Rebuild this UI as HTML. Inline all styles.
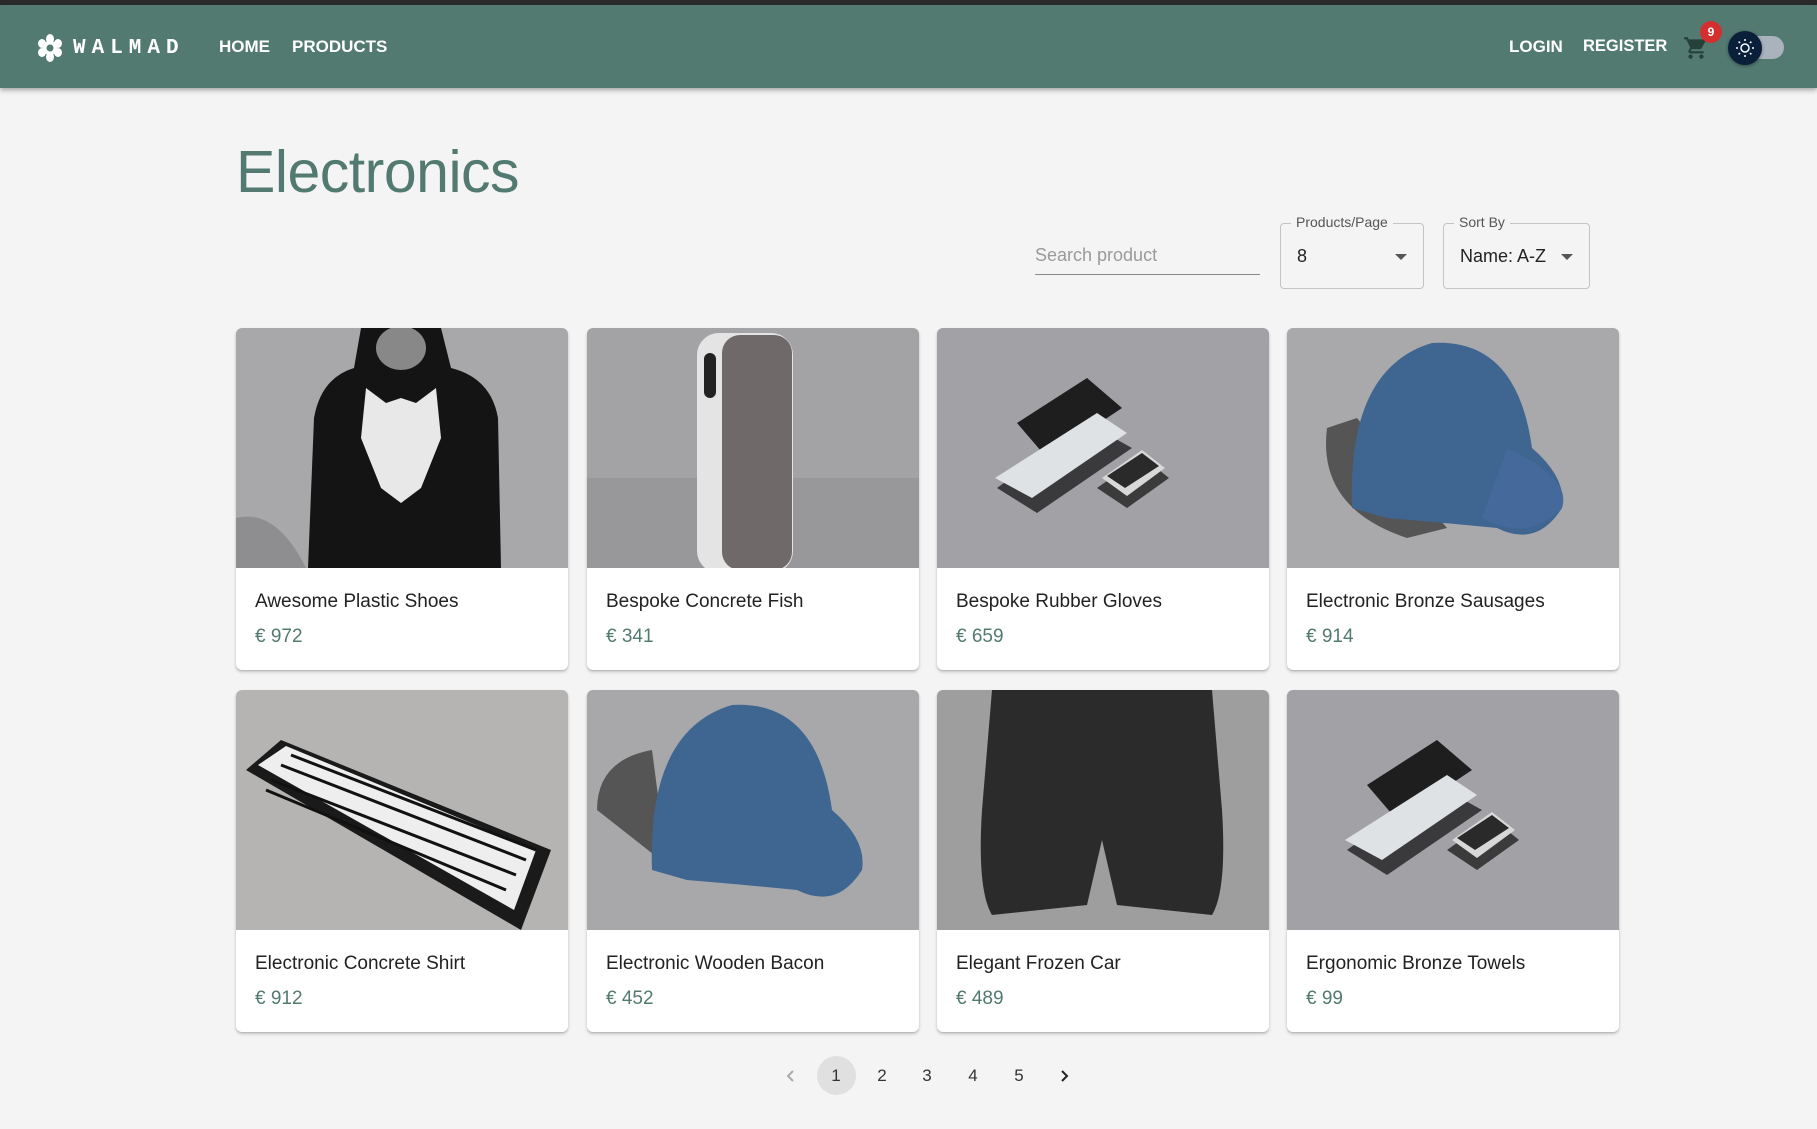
<!DOCTYPE html>
<html><head><meta charset="utf-8"><style>
*{margin:0;padding:0;box-sizing:border-box}
body{width:1817px;height:1129px;background:#f4f4f4;font-family:"Liberation Sans",sans-serif;position:relative;overflow:hidden}
.top{position:absolute;left:0;top:0;width:1817px;height:5px;background:#2b2b2b}
.hdr{position:absolute;left:0;top:5px;width:1817px;height:83px;background:#527a70;box-shadow:0 2px 5px rgba(0,0,0,.35)}
.ab{position:absolute;color:#fff;font-weight:bold;font-size:17px;top:37px}
.logo{position:absolute;left:73px;top:37px;color:#fff;font-family:"Liberation Mono",monospace;font-weight:bold;font-size:21px;letter-spacing:6px}
h1{position:absolute;left:236px;top:138px;font-size:59px;font-weight:normal;color:#527a70;letter-spacing:-0.5px}
.search{position:absolute;left:1035px;top:230px;width:225px;height:45px;border-bottom:1px solid #8a8a8a;color:#9a9a9a;font-size:18px;padding-top:15px}
.box{position:absolute;top:223px;height:66px;border:1px solid #c4c4c4;border-radius:4px;font-size:18px;color:#222}
.box .lb{position:absolute;top:-10px;left:10px;background:#f4f4f4;padding:0 5px;font-size:14px;color:#555}
.box .v{position:absolute;left:16px;top:22px}
.box .ar{position:absolute;top:30px;width:0;height:0;border-left:6px solid transparent;border-right:6px solid transparent;border-top:6px solid #555}
.card{position:absolute;width:332px;height:342px;background:#fff;border-radius:6px;overflow:hidden;box-shadow:0 2px 3px rgba(0,0,0,.2),0 1px 1px rgba(0,0,0,.1)}
.card svg{display:block;width:332px;height:240px}
.card .t{position:absolute;left:19px;top:263px;font-size:19px;color:#222}
.card .p{position:absolute;left:19px;top:298px;font-size:19px;color:#527a70}
.pg{position:absolute;top:1066px;font-size:17px;color:#333;width:38px;text-align:center}
</style></head><body>
<div class="top"></div>
<div class="hdr"></div>
<svg style="position:absolute;left:38px;top:34px" width="24" height="28" viewBox="0 0 24 28"><g fill="#fff"><circle cx="12" cy="14" r="7"/><ellipse cx="12" cy="5" rx="4" ry="5"/><ellipse cx="12" cy="23" rx="4" ry="5"/><ellipse cx="4" cy="9.5" rx="4" ry="4.5"/><ellipse cx="20" cy="9.5" rx="4" ry="4.5"/><ellipse cx="4" cy="18.5" rx="4" ry="4.5"/><ellipse cx="20" cy="18.5" rx="4" ry="4.5"/></g><circle cx="12" cy="14" r="3.5" fill="#527a70"/></svg>
<div class="logo">WALMAD</div>
<div class="ab" style="left:219px">HOME</div>
<div class="ab" style="left:292px">PRODUCTS</div>
<div class="ab" style="left:1509px">LOGIN</div>
<div class="ab" style="left:1583px;font-size:16.5px">REGISTER</div>
<svg style="position:absolute;left:1683px;top:35px" width="26" height="26" viewBox="0 0 24 24"><path fill="#26403a" d="M7 18c-1.1 0-2 .9-2 2s.9 2 2 2 2-.9 2-2-.9-2-2-2zM1 2v2h2l3.6 7.59-1.35 2.45c-.16.28-.25.61-.25.96 0 1.1.9 2 2 2h12v-2H7.42c-.14 0-.25-.11-.25-.25l.03-.12.9-1.63h7.45c.75 0 1.41-.41 1.750-1.03l3.58-6.49A1 1 0 0 0 20 4H5.21l-.94-2H1zm16 16c-1.1 0-2 .9-2 2s.9 2 2 2 2-.9 2-2-.9-2-2-2z"/></svg>
<div style="position:absolute;left:1700px;top:21px;width:22px;height:22px;border-radius:50%;background:#d32f2f;color:#fff;font-size:12px;font-weight:bold;text-align:center;line-height:22px">9</div>
<div style="position:absolute;left:1742px;top:36px;width:42px;height:23px;border-radius:12px;background:#a9b3bd"></div>
<div style="position:absolute;left:1728px;top:31px;width:34px;height:34px;border-radius:50%;background:#0a1f3a;box-shadow:0 1px 3px rgba(0,0,0,.4)"></div>
<svg style="position:absolute;left:1734px;top:37px" width="22" height="22" viewBox="0 0 22 22"><g stroke="#fff" stroke-width="1.5" fill="none"><circle cx="11" cy="11" r="4"/><path d="M11 2v2M11 18v2M2 11h2M18 11h2M4.6 4.6l1.4 1.4M16 16l1.4 1.4M4.6 17.4L6 16M16 6l1.4-1.4"/></g></svg>
<h1>Electronics</h1>
<div class="search">Search product</div>
<div class="box" style="left:1280px;width:144px"><span class="lb">Products/Page</span><span class="v">8</span><span class="ar" style="left:114px"></span></div>
<div class="box" style="left:1443px;width:147px"><span class="lb">Sort By</span><span class="v">Name: A-Z</span><span class="ar" style="left:117px"></span></div>

<div class="card" style="left:236px;top:328px"><svg viewBox="0 0 332 240"><rect width="332" height="240" fill="#a8a8aa"/><path d="M0 190 Q40 180 70 240 H0z" fill="#8e8e90"/><path d="M125 0 H205 L215 40 Q255 50 262 90 L265 240 H72 L78 90 Q85 50 118 40z" fill="#141414"/><ellipse cx="165" cy="20" rx="25" ry="22" fill="#888"/><path d="M130 60 L150 75 L165 70 L180 75 L200 60 L205 110 L185 160 L165 175 L145 160 L125 110z" fill="#e8e8e8"/></svg><div class="t">Awesome Plastic Shoes</div><div class="p">€ 972</div></div>
<div class="card" style="left:587px;top:328px"><svg viewBox="0 0 332 240"><rect width="332" height="240" fill="#a3a3a6"/><rect y="150" width="332" height="90" fill="#98989b"/><rect x="110" y="5" width="96" height="240" rx="22" fill="#e4e4e4"/><rect x="135" y="7" width="70" height="235" rx="18" fill="#6f6a69"/><rect x="117" y="25" width="12" height="45" rx="6" fill="#222"/></svg><div class="t">Bespoke Concrete Fish</div><div class="p">€ 341</div></div>
<div class="card" style="left:937px;top:328px"><svg viewBox="0 0 332 240"><rect width="332" height="240" fill="#a2a1a5"/><path d="M80 95 L150 50 L185 80 L110 130z" fill="#1e1e1e"/><path d="M60 160 L150 95 L195 120 L100 185z" fill="#3a3a3c"/><path d="M58 150 L160 85 L190 105 L95 170z" fill="#dfe2e4"/><path d="M160 160 L205 128 L232 150 L190 180z" fill="#3b3b3b"/><path d="M165 150 L205 122 L228 140 L190 168z" fill="#d8d8d8"/><path d="M170 148 L205 125 L222 138 L188 160z" fill="#2a2a2a"/></svg><div class="t">Bespoke Rubber Gloves</div><div class="p">€ 659</div></div>
<div class="card" style="left:1287px;top:328px"><svg viewBox="0 0 332 240"><rect width="332" height="240" fill="#a9a9ab"/><path d="M40 100 Q30 180 120 210 L160 200 L70 90z" fill="#555"/><path d="M65 180 Q60 40 145 15 Q230 10 245 120 Q280 150 275 180 Q250 220 210 200 Q160 195 100 190z" fill="#3f6591"/><path d="M220 120 Q285 150 275 180 Q240 215 195 190z" fill="#44699a"/></svg><div class="t">Electronic Bronze Sausages</div><div class="p">€ 914</div></div>

<div class="card" style="left:236px;top:690px"><svg viewBox="0 0 332 240"><rect width="332" height="240" fill="#b5b4b3"/><path d="M10 80 L45 50 L315 160 L285 240 Z" fill="#1a1a1a"/><path d="M22 75 L50 56 L300 160 L278 220 Z" fill="#eee"/><path d="M35 90 L280 185 M45 75 L290 170 M30 100 L270 200 M55 65 L300 160" stroke="#111" stroke-width="3"/></svg><div class="t">Electronic Concrete Shirt</div><div class="p">€ 912</div></div>
<div class="card" style="left:587px;top:690px"><svg viewBox="0 0 332 240"><rect width="332" height="240" fill="#a8a8aa"/><path d="M10 120 Q10 70 65 60 L80 175z" fill="#555"/><path d="M65 180 Q60 40 145 15 Q230 10 245 120 Q280 150 275 180 Q250 220 210 200 Q160 195 100 190z" fill="#3f6591"/></svg><div class="t">Electronic Wooden Bacon</div><div class="p">€ 452</div></div>
<div class="card" style="left:937px;top:690px"><svg viewBox="0 0 332 240"><rect width="332" height="240" fill="#9f9e9f"/><path d="M55 0 H275 L285 120 Q290 200 275 225 L180 215 L165 150 L150 215 L55 225 Q40 200 45 120z" fill="#2c2b2b"/></svg><div class="t">Elegant Frozen Car</div><div class="p">€ 489</div></div>
<div class="card" style="left:1287px;top:690px"><svg viewBox="0 0 332 240"><rect width="332" height="240" fill="#a2a1a5"/><path d="M80 95 L150 50 L185 80 L110 130z" fill="#1e1e1e"/><path d="M60 160 L150 95 L195 120 L100 185z" fill="#3a3a3c"/><path d="M58 150 L160 85 L190 105 L95 170z" fill="#dfe2e4"/><path d="M160 160 L205 128 L232 150 L190 180z" fill="#3b3b3b"/><path d="M165 150 L205 122 L228 140 L190 168z" fill="#d8d8d8"/><path d="M170 148 L205 125 L222 138 L188 160z" fill="#2a2a2a"/></svg><div class="t">Ergonomic Bronze Towels</div><div class="p">€ 99</div></div>

<svg style="position:absolute;left:783px;top:1068px" width="16" height="16" viewBox="0 0 16 16"><path d="M10 3 L5 8 L10 13" stroke="#aaa" stroke-width="2" fill="none"/></svg>
<div style="position:absolute;left:817px;top:1056px;width:39px;height:39px;border-radius:50%;background:#e0e0e0"></div>
<div class="pg" style="left:817px">1</div>
<div class="pg" style="left:863px">2</div>
<div class="pg" style="left:908px">3</div>
<div class="pg" style="left:954px">4</div>
<div class="pg" style="left:1000px">5</div>
<svg style="position:absolute;left:1056px;top:1068px" width="16" height="16" viewBox="0 0 16 16"><path d="M6 3 L11 8 L6 13" stroke="#222" stroke-width="2" fill="none"/></svg>
</body></html>
